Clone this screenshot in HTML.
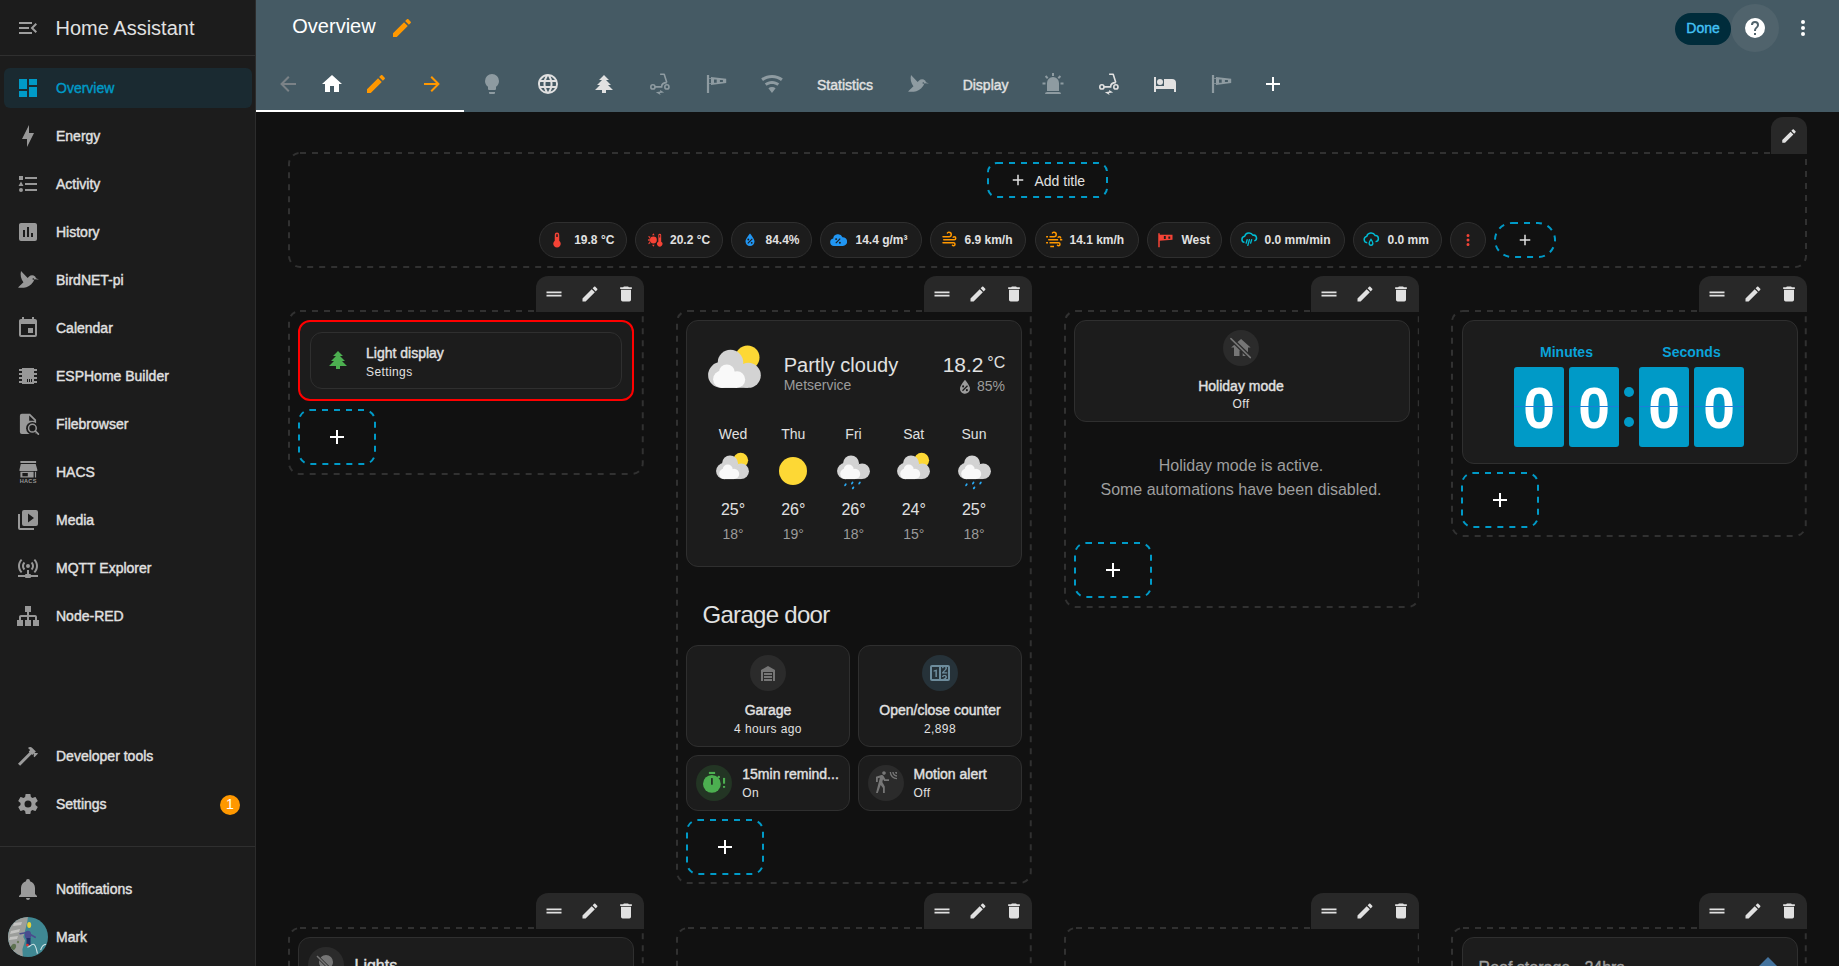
<!DOCTYPE html><html><head><meta charset="utf-8"><style>
html,body{margin:0;padding:0;}
body{width:1839px;height:966px;overflow:hidden;position:relative;background:#111111;font-family:"Liberation Sans",sans-serif;}
.t{position:absolute;white-space:nowrap;-webkit-font-smoothing:antialiased;}
svg{display:block;}
</style></head><body>
<div style="position:absolute;left:0px;top:0px;width:256px;height:966px;box-sizing:border-box;background:#1c1c1c;border-right:1px solid #2c2c2c;"></div>
<div style="position:absolute;left:0px;top:55px;width:255px;height:1px;box-sizing:border-box;background:#2f2f2f;"></div>
<svg style="position:absolute;left:16px;top:16px;width:24px;height:24px" viewBox="0 0 24 24"><path fill="#9e9e9e" d="M21,15.61L19.59,17L14.58,12L19.59,7L21,8.39L17.44,12L21,15.61M3,6H16V8H3V6M3,13V11H13V13H3M3,18V16H16V18H3Z"/></svg>
<div class="t" style="left:55.5px;top:17.87px;font-size:20px;line-height:20px;color:#e1e1e1;font-weight:400;">Home Assistant</div>
<div style="position:absolute;left:4px;top:68px;width:248px;height:40px;box-sizing:border-box;background:#1a2a31;border-radius:6px;"></div>
<svg style="position:absolute;left:16px;top:76px;width:24px;height:24px" viewBox="0 0 24 24"><path fill="#009ac7" d="M13,3V9H21V3M13,21H21V11H13M3,21H11V15H3M3,13H11V3H3V13Z"/></svg>
<div class="t" style="left:56px;top:80.85px;font-size:14px;line-height:14px;color:#009ac7;font-weight:400;-webkit-text-stroke:0.4px #009ac7;">Overview</div>
<svg style="position:absolute;left:16px;top:124px;width:24px;height:24px" viewBox="0 0 24 24"><path fill="#989898" d="M11 15H6L13 1V9H18L11 23V15Z"/></svg>
<div class="t" style="left:56px;top:128.85px;font-size:14px;line-height:14px;color:#e1e1e1;font-weight:400;-webkit-text-stroke:0.4px #e1e1e1;">Energy</div>
<svg style="position:absolute;left:16px;top:172px;width:24px;height:24px" viewBox="0 0 24 24"><path fill="#989898" d="M5,9.5L7.5,14H2.5L5,9.5M3,4H7V8H3V4M5,20A2,2 0 0,0 7,18A2,2 0 0,0 5,16A2,2 0 0,0 3,18A2,2 0 0,0 5,20M9,5V7H21V5H9M9,19H21V17H9V19M9,13H21V11H9V13Z"/></svg>
<div class="t" style="left:56px;top:176.85px;font-size:14px;line-height:14px;color:#e1e1e1;font-weight:400;-webkit-text-stroke:0.4px #e1e1e1;">Activity</div>
<svg style="position:absolute;left:16px;top:220px;width:24px;height:24px" viewBox="0 0 24 24"><path fill="#989898" d="M19 3H5C3.89 3 3 3.89 3 5V19A2 2 0 0 0 5 21H19A2 2 0 0 0 21 19V5C21 3.89 20.1 3 19 3M9 17H7V10H9V17M13 17H11V7H13V17M17 17H15V13H17V17Z"/></svg>
<div class="t" style="left:56px;top:224.85px;font-size:14px;line-height:14px;color:#e1e1e1;font-weight:400;-webkit-text-stroke:0.4px #e1e1e1;">History</div>
<svg style="position:absolute;left:16px;top:268px;width:24px;height:24px" viewBox="0 0 24 24"><path fill="#989898" d="M23 11.5L19.95 10.37C19.69 9.22 19.04 8.56 19.04 8.56C17.4 6.92 14.75 6.92 13.11 8.56L11.63 10.04L5 3C4 7 5 11 7.45 14.22L2 19.5C2 19.5 10.04 21.5 15.3 16.18C18.18 13.3 18.36 11.28 18.36 11.28L23 11.5M17.91 11.59C17.58 11.92 17.05 11.92 16.72 11.59C16.39 11.26 16.39 10.73 16.72 10.4C17.05 10.07 17.58 10.07 17.91 10.4C18.24 10.73 18.24 11.26 17.91 11.59Z"/></svg>
<div class="t" style="left:56px;top:272.85px;font-size:14px;line-height:14px;color:#e1e1e1;font-weight:400;-webkit-text-stroke:0.4px #e1e1e1;">BirdNET-pi</div>
<svg style="position:absolute;left:16px;top:316px;width:24px;height:24px" viewBox="0 0 24 24"><path fill="#989898" d="M19,19H5V8H19M16,1V3H8V1H6V3H5C3.89,3 3,3.89 3,5V19A2,2 0 0,0 5,21H19A2,2 0 0,0 21,19V5C21,3.89 20.1,3 19,3H18V1M17,12H12V17H17V12Z"/></svg>
<div class="t" style="left:56px;top:320.85px;font-size:14px;line-height:14px;color:#e1e1e1;font-weight:400;-webkit-text-stroke:0.4px #e1e1e1;">Calendar</div>
<svg style="position:absolute;left:16px;top:364px;width:24px;height:24px" viewBox="0 0 24 24"><path fill="#989898" d="M6,4H18V5H21V7H18V9H21V11H18V13H21V15H18V17H21V19H18V20H6V19H3V17H6V15H3V13H6V11H3V9H6V7H3V5H6V4M11,15V18H12V15H11M13,15V18H14V15H13M15,15V18H16V15H15Z"/></svg>
<div class="t" style="left:56px;top:368.85px;font-size:14px;line-height:14px;color:#e1e1e1;font-weight:400;-webkit-text-stroke:0.4px #e1e1e1;">ESPHome Builder</div>
<svg style="position:absolute;left:16px;top:412px;width:24px;height:24px" viewBox="0 0 24 24"><path fill="#989898" fill-rule="evenodd" d="M6,1.7H14L20.1,7.8V22H6A2,2 0 0,1 3.9,20V3.7A2,2 0 0,1 6,1.7Z M13.2,3.4V8.8H18.6Z"/><circle cx="16.4" cy="16.2" r="6.3" fill="#1c1c1c"/><path fill="#1c1c1c" d="M17.5,17.5L24,24V19Z"/><circle cx="16.4" cy="16.2" r="3.85" fill="none" stroke="#989898" stroke-width="1.5"/><path stroke="#989898" stroke-width="1.7" stroke-linecap="round" d="M19.4,19.2L22.4,22.2"/></svg>
<div class="t" style="left:56px;top:416.85px;font-size:14px;line-height:14px;color:#e1e1e1;font-weight:400;-webkit-text-stroke:0.4px #e1e1e1;">Filebrowser</div>
<svg style="position:absolute;left:16px;top:460px;width:24px;height:24px" viewBox="0 0 24 24"><path fill="#989898" d="M4.4,1H20.1V3H4.4Z M4.8,3.9H19.7L21.3,9.6V10.9H3.5V9.6Z M4.4,11.7H17.6V17.5H4.4Z M18.9,11.7H20.1V17.5H18.9Z"/><rect x="6.4" y="13" width="5.4" height="3.3" fill="#1c1c1c"/><text x="12.2" y="23.3" font-size="5.6" font-family="Liberation Sans" font-weight="bold" letter-spacing="0.25" fill="#989898" text-anchor="middle">HACS</text></svg>
<div class="t" style="left:56px;top:464.85px;font-size:14px;line-height:14px;color:#e1e1e1;font-weight:400;-webkit-text-stroke:0.4px #e1e1e1;">HACS</div>
<svg style="position:absolute;left:16px;top:508px;width:24px;height:24px" viewBox="0 0 24 24"><path fill="#989898" d="M4,6H2V20A2,2 0 0,0 4,22H18V20H4V6M20,2H8A2,2 0 0,0 6,4V16A2,2 0 0,0 8,18H20A2,2 0 0,0 22,16V4A2,2 0 0,0 20,2M12,14.5V5.5L18,10L12,14.5Z"/></svg>
<div class="t" style="left:56px;top:512.85px;font-size:14px;line-height:14px;color:#e1e1e1;font-weight:400;-webkit-text-stroke:0.4px #e1e1e1;">Media</div>
<svg style="position:absolute;left:16px;top:556px;width:24px;height:24px" viewBox="0 0 24 24"><path fill="#989898" d="M4.93,2.93C3.12,4.74 2,7.24 2,10C2,12.76 3.12,15.26 4.93,17.07L6.34,15.66C4.89,14.22 4,12.22 4,10C4,7.79 4.89,5.78 6.34,4.34L4.93,2.93M19.07,2.93L17.66,4.34C19.11,5.78 20,7.79 20,10C20,12.22 19.11,14.22 17.66,15.66L19.07,17.07C20.88,15.26 22,12.76 22,10C22,7.24 20.88,4.74 19.07,2.93M7.76,5.76C6.67,6.85 6,8.35 6,10C6,11.65 6.67,13.15 7.76,14.24L9.17,12.83C8.45,12.11 8,11.11 8,10C8,8.89 8.45,7.89 9.17,7.17L7.76,5.76M16.24,5.76L14.83,7.17C15.55,7.89 16,8.89 16,10C16,11.11 15.55,12.11 14.83,12.83L16.24,14.24C17.33,13.15 18,11.65 18,10C18,8.35 17.33,6.85 16.24,5.76M12,8A2,2 0 0,0 10,10A2,2 0 0,0 12,12A2,2 0 0,0 14,10A2,2 0 0,0 12,8M11,14V18H10A1,1 0 0,0 9,19H2V21H9A1,1 0 0,0 10,22H14A1,1 0 0,0 15,21H22V19H15A1,1 0 0,0 14,18H13V14H11Z"/></svg>
<div class="t" style="left:56px;top:560.85px;font-size:14px;line-height:14px;color:#e1e1e1;font-weight:400;-webkit-text-stroke:0.4px #e1e1e1;">MQTT Explorer</div>
<svg style="position:absolute;left:16px;top:604px;width:24px;height:24px" viewBox="0 0 24 24"><path fill="#989898" d="M9,2V8H11V11H5C3.89,11 3,11.89 3,13V16H1V22H7V16H5V13H11V16H9V22H15V16H13V13H19V16H17V22H23V16H21V13C21,11.89 20.1,11 19,11H13V8H15V2H9Z"/></svg>
<div class="t" style="left:56px;top:608.85px;font-size:14px;line-height:14px;color:#e1e1e1;font-weight:400;-webkit-text-stroke:0.4px #e1e1e1;">Node-RED</div>
<svg style="position:absolute;left:16px;top:744px;width:24px;height:24px" viewBox="0 0 24 24"><path fill="#9b9b9b" d="M2 19.63L13.43 8.2L12.72 7.5L14.14 6.07L12 3.89C13.2 2.7 15.09 2.7 16.27 3.89L19.87 7.5L18.45 8.91H21.29L22 9.62L18.45 13.21L17.74 12.5V9.62L16.27 11.04L15.56 10.33L4.13 21.76L2 19.63Z"/></svg>
<div class="t" style="left:56px;top:748.85px;font-size:14px;line-height:14px;color:#e1e1e1;font-weight:400;-webkit-text-stroke:0.4px #e1e1e1;">Developer tools</div>
<svg style="position:absolute;left:16px;top:792px;width:24px;height:24px" viewBox="0 0 24 24"><path fill="#9b9b9b" d="M12,15.5A3.5,3.5 0 0,1 8.5,12A3.5,3.5 0 0,1 12,8.5A3.5,3.5 0 0,1 15.5,12A3.5,3.5 0 0,1 12,15.5M19.43,12.97C19.47,12.65 19.5,12.33 19.5,12C19.5,11.67 19.47,11.34 19.43,11L21.54,9.37C21.73,9.22 21.78,8.95 21.66,8.73L19.66,5.27C19.54,5.05 19.27,4.96 19.05,5.05L16.56,6.05C16.04,5.66 15.5,5.32 14.87,5.07L14.5,2.42C14.46,2.18 14.25,2 14,2H10C9.75,2 9.54,2.18 9.5,2.42L9.13,5.07C8.5,5.32 7.96,5.66 7.44,6.05L4.95,5.05C4.73,4.96 4.46,5.05 4.34,5.27L2.34,8.73C2.21,8.95 2.27,9.22 2.46,9.37L4.57,11C4.53,11.34 4.5,11.67 4.5,12C4.5,12.33 4.53,12.65 4.57,12.97L2.46,14.63C2.27,14.78 2.21,15.05 2.34,15.27L4.34,18.73C4.46,18.95 4.73,19.03 4.95,18.95L7.44,17.94C7.96,18.34 8.5,18.68 9.13,18.93L9.5,21.58C9.54,21.82 9.75,22 10,22H14C14.25,22 14.46,21.82 14.5,21.58L14.87,18.93C15.5,18.67 16.04,18.34 16.56,17.94L19.05,18.95C19.27,19.03 19.54,18.95 19.66,18.73L21.66,15.27C21.78,15.05 21.73,14.78 21.54,14.63L19.43,12.97Z"/></svg>
<div class="t" style="left:56px;top:796.85px;font-size:14px;line-height:14px;color:#e1e1e1;font-weight:400;-webkit-text-stroke:0.4px #e1e1e1;">Settings</div>
<div style="position:absolute;left:220px;top:794.5px;width:20px;height:20px;box-sizing:border-box;background:#ff9800;border-radius:50%;"></div>
<div class="t" style="left:-370px;width:1200px;text-align:center;top:797.35px;font-size:14px;line-height:14px;color:#ffffff;font-weight:400;">1</div>
<div style="position:absolute;left:0px;top:846px;width:255px;height:1px;box-sizing:border-box;background:#2f2f2f;"></div>
<svg style="position:absolute;left:16px;top:877px;width:24px;height:24px" viewBox="0 0 24 24"><path fill="#9b9b9b" d="M21,19V20H3V19L5,17V11C5,7.9 7.03,5.17 10,4.29C10,4.19 10,4.1 10,4A2,2 0 0,1 12,2A2,2 0 0,1 14,4C14,4.1 14,4.19 14,4.29C16.97,5.17 19,7.9 19,11V17L21,19M14,21A2,2 0 0,1 12,23A2,2 0 0,1 10,21"/></svg>
<div class="t" style="left:56px;top:881.85px;font-size:14px;line-height:14px;color:#e1e1e1;font-weight:400;-webkit-text-stroke:0.4px #e1e1e1;">Notifications</div>
<svg style="position:absolute;left:8px;top:917px;width:40px;height:40px" viewBox="0 0 40 40"><defs><clipPath id="av"><circle cx="20" cy="20" r="20"/></clipPath></defs><g clip-path="url(#av)"><rect width="40" height="40" fill="#3f8893"/><path fill="#9c9e9b" d="M0,0H19.9L19.4,3.9L17.6,11.7L15.3,19.9L17.1,23.5L14.4,32.2L14.9,40H0Z"/><path fill="#c4c4c2" d="M6,6L14,5L13,8L5,9Z M3,14L12,12L11,15L2,17Z M2,20L10,19L9,22L1,23Z"/><path fill="#5b6e4c" d="M5,28A2.5,2.5 0 1,0 5.1,28Z"/><circle cx="6" cy="29" r="2.2" fill="#5e7250"/><circle cx="10" cy="25" r="1.2" fill="#6a7a58"/><path fill="none" stroke="#4a4c8e" stroke-width="1.6" stroke-linecap="round" d="M12.1,16.7L19,15.5L27.2,20.3"/><ellipse cx="20" cy="18" rx="3.2" ry="4.3" fill="#4a4c8e"/><rect x="18.5" y="21" width="4" height="7" fill="#22306a"/><ellipse cx="21.2" cy="8" rx="2" ry="3" fill="#e6d23a"/><circle cx="19.4" cy="28.1" r="1.4" fill="#e03030"/><path fill="none" stroke="#cfe3e6" stroke-width="1.1" d="M19.4,29.9C21,31 23,27 25.3,27.2C28,27.5 28.5,33 29.4,36.7 M32.6,33C33.5,30 36,27.5 38.1,27.2"/></g></svg>
<div class="t" style="left:56px;top:929.85px;font-size:14px;line-height:14px;color:#e1e1e1;font-weight:400;-webkit-text-stroke:0.4px #e1e1e1;">Mark</div>
<div style="position:absolute;left:256px;top:0px;width:1583px;height:112px;box-sizing:border-box;background:#455a64;"></div>
<div class="t" style="left:292.3px;top:15.77px;font-size:20px;line-height:20px;color:#ffffff;font-weight:400;">Overview</div>
<svg style="position:absolute;left:390px;top:16px;width:24px;height:24px" viewBox="0 0 24 24"><path fill="#ff9800" d="M20.71,7.04C21.1,6.65 21.1,6 20.71,5.63L18.37,3.29C18,2.9 17.35,2.9 16.96,3.29L15.12,5.12L18.87,8.87M3,17.25V21H6.75L17.81,9.93L14.06,6.18L3,17.25Z"/></svg>
<div style="position:absolute;left:256px;top:110px;width:208px;height:2px;box-sizing:border-box;background:#ffffff;"></div>
<svg style="position:absolute;left:276px;top:72px;width:24px;height:24px" viewBox="0 0 24 24"><path fill="#7b8287" d="M20,11V13H8L13.5,18.5L12.08,19.92L4.16,12L12.08,4.08L13.5,5.5L8,11H20Z"/></svg>
<svg style="position:absolute;left:320px;top:72px;width:24px;height:24px" viewBox="0 0 24 24"><path fill="#ffffff" d="M10,20V14H14V20H19V12H22L12,3L2,12H5V20H10Z"/></svg>
<svg style="position:absolute;left:364px;top:72px;width:24px;height:24px" viewBox="0 0 24 24"><path fill="#ff9800" d="M20.71,7.04C21.1,6.65 21.1,6 20.71,5.63L18.37,3.29C18,2.9 17.35,2.9 16.96,3.29L15.12,5.12L18.87,8.87M3,17.25V21H6.75L17.81,9.93L14.06,6.18L3,17.25Z"/></svg>
<svg style="position:absolute;left:420px;top:72px;width:24px;height:24px" viewBox="0 0 24 24"><path fill="#ff9800" d="M4,11V13H16L10.5,18.5L11.92,19.92L19.84,12L11.92,4.08L10.5,5.5L16,11H4Z"/></svg>
<svg style="position:absolute;left:480px;top:72px;width:24px;height:24px" viewBox="0 0 24 24"><path fill="#8e9ba1" d="M12,2A7,7 0 0,0 5,9C5,11.38 6.19,13.47 8,14.74V17A1,1 0 0,0 9,18H15A1,1 0 0,0 16,17V14.74C17.81,13.47 19,11.38 19,9A7,7 0 0,0 12,2M9,21A1,1 0 0,0 10,22H14A1,1 0 0,0 15,21V20H9V21Z"/></svg>
<svg style="position:absolute;left:536px;top:72px;width:24px;height:24px" viewBox="0 0 24 24"><path fill="#e1e1e1" d="M16.36,14C16.44,13.34 16.5,12.68 16.5,12C16.5,11.32 16.44,10.66 16.36,10H19.74C19.9,10.64 20,11.31 20,12C20,12.69 19.9,13.36 19.74,14M14.59,19.56C15.19,18.45 15.65,17.25 15.97,16H18.92C17.96,17.65 16.43,18.93 14.59,19.56M14.34,14H9.66C9.56,13.34 9.5,12.68 9.5,12C9.5,11.32 9.56,10.65 9.66,10H14.34C14.43,10.65 14.5,11.32 14.5,12C14.5,12.68 14.43,13.34 14.34,14M12,19.96C11.17,18.76 10.5,17.43 10.09,16H13.91C13.5,17.43 12.83,18.76 12,19.96M8,8H5.08C6.03,6.34 7.57,5.06 9.4,4.44C8.8,5.55 8.35,6.75 8,8M5.08,16H8C8.35,17.25 8.8,18.45 9.4,19.56C7.57,18.93 6.03,17.65 5.08,16M4.26,14C4.1,13.36 4,12.69 4,12C4,11.31 4.1,10.64 4.26,10H7.64C7.56,10.66 7.5,11.32 7.5,12C7.5,12.68 7.56,13.34 7.64,14M12,4.03C12.83,5.23 13.5,6.57 13.91,8H10.09C10.5,6.57 11.17,5.23 12,4.03M18.92,8H15.97C15.65,6.75 15.19,5.55 14.59,4.44C16.43,5.07 17.96,6.34 18.92,8M12,2C6.47,2 2,6.5 2,12A10,10 0 0,0 12,22A10,10 0 0,0 22,12A10,10 0 0,0 12,2Z"/></svg>
<svg style="position:absolute;left:592px;top:72px;width:24px;height:24px" viewBox="0 0 24 24"><path fill="#e1e1e1" d="M10,21V18H3L8,13H5L10,8H7L12,3L17,8H14L19,13H16L21,18H14V21H10Z"/></svg>
<svg style="position:absolute;left:648px;top:72px;width:24px;height:24px" viewBox="0 0 24 24"><g fill="none" stroke="#8e9ba1" stroke-width="1.6"><circle cx="4.9" cy="14.9" r="2.1"/><circle cx="18.9" cy="14.9" r="2.1"/><path d="M12.1,2.2H16.2L18.8,10.6" stroke-linejoin="round"/><path d="M7,14.9H13.6C13.6,12.3 15.5,10.6 18.8,10.6"/></g><path fill="#8e9ba1" d="M7.8,20.3L12.2,19.5L12.1,18.1L16.2,20.4L11.9,21.1L12.6,23Z"/></svg>
<svg style="position:absolute;left:704px;top:72px;width:24px;height:24px" viewBox="0 0 24 24"><path fill="#8e9ba1" fill-rule="evenodd" d="M2.9,3.1H5.1V21.1H2.9Z M5,6H7.1V6.8H5Z M5,10.9H7.1V11.7H5Z M7,5L22.2,6.7V11L7,12.9Z M10,7.5H12.7V10.8H10Z M15.9,8H18.9V10H15.9Z"/></svg>
<svg style="position:absolute;left:760px;top:72px;width:24px;height:24px" viewBox="0 0 24 24"><path fill="#8e9ba1" d="M12,21L15.6,16.2C14.6,15.45 13.35,15 12,15C10.65,15 9.4,15.45 8.4,16.2L12,21M12,3C7.95,3 4.21,4.34 1.2,6.6L3,9C5.5,7.12 8.62,6 12,6C15.38,6 18.5,7.12 21,9L22.8,6.6C19.79,4.34 16.05,3 12,3M12,9C9.3,9 6.81,9.89 4.8,11.4L6.6,13.8C8.1,12.67 9.97,12 12,12C14.03,12 15.9,12.67 17.4,13.8L19.2,11.4C17.19,9.89 14.7,9 12,9Z"/></svg>
<div class="t" style="left:245px;width:1200px;text-align:center;top:78.15px;font-size:14px;line-height:14px;color:#e1e1e1;font-weight:400;-webkit-text-stroke:0.4px #e1e1e1;">Statistics</div>
<svg style="position:absolute;left:906px;top:72px;width:24px;height:24px" viewBox="0 0 24 24"><path fill="#8e9ba1" d="M23 11.5L19.95 10.37C19.69 9.22 19.04 8.56 19.04 8.56C17.4 6.92 14.75 6.92 13.11 8.56L11.63 10.04L5 3C4 7 5 11 7.45 14.22L2 19.5C2 19.5 10.04 21.5 15.3 16.18C18.18 13.3 18.36 11.28 18.36 11.28L23 11.5M17.91 11.59C17.58 11.92 17.05 11.92 16.72 11.59C16.39 11.26 16.39 10.73 16.72 10.4C17.05 10.07 17.58 10.07 17.91 10.4C18.24 10.73 18.24 11.26 17.91 11.59Z"/></svg>
<div class="t" style="left:385.6px;width:1200px;text-align:center;top:78.15px;font-size:14px;line-height:14px;color:#e1e1e1;font-weight:400;-webkit-text-stroke:0.4px #e1e1e1;">Display</div>
<svg style="position:absolute;left:1041px;top:72px;width:24px;height:24px" viewBox="0 0 24 24"><path fill="#8e9ba1" d="M6,6.9L3.87,4.78L5.28,3.37L7.4,5.5L6,6.9M13,1V4H11V1H13M20.13,4.78L18,6.9L16.6,5.5L18.72,3.37L20.13,4.78M4.5,10.5V12.5H1.5V10.5H4.5M19.5,10.5H22.5V12.5H19.5V10.5M6,20H18A2,2 0 0,1 20,22H4A2,2 0 0,1 6,20M12,5A6,6 0 0,1 18,11V19H6V11A6,6 0 0,1 12,5Z"/></svg>
<svg style="position:absolute;left:1097px;top:72px;width:24px;height:24px" viewBox="0 0 24 24"><g fill="none" stroke="#e1e1e1" stroke-width="1.6"><circle cx="4.9" cy="14.9" r="2.1"/><circle cx="18.9" cy="14.9" r="2.1"/><path d="M12.1,2.2H16.2L18.8,10.6" stroke-linejoin="round"/><path d="M7,14.9H13.6C13.6,12.3 15.5,10.6 18.8,10.6"/></g><path fill="#e1e1e1" d="M7.8,20.3L12.2,19.5L12.1,18.1L16.2,20.4L11.9,21.1L12.6,23Z"/></svg>
<svg style="position:absolute;left:1153px;top:72px;width:24px;height:24px" viewBox="0 0 24 24"><path fill="#e1e1e1" d="M19,7H11V14H3V5H1V20H3V17H21V20H23V11A4,4 0 0,0 19,7M7,13A3,3 0 0,0 10,10A3,3 0 0,0 7,7A3,3 0 0,0 4,10A3,3 0 0,0 7,13Z"/></svg>
<svg style="position:absolute;left:1209px;top:72px;width:24px;height:24px" viewBox="0 0 24 24"><path fill="#8e9ba1" fill-rule="evenodd" d="M2.9,3.1H5.1V21.1H2.9Z M5,6H7.1V6.8H5Z M5,10.9H7.1V11.7H5Z M7,5L22.2,6.7V11L7,12.9Z M10,7.5H12.7V10.8H10Z M15.9,8H18.9V10H15.9Z"/></svg>
<svg style="position:absolute;left:1261px;top:72px;width:24px;height:24px" viewBox="0 0 24 24"><path fill="#ffffff" d="M19,13H13V19H11V13H5V11H11V5H13V11H19V13Z"/></svg>
<div style="position:absolute;left:1675px;top:13px;width:56px;height:32px;box-sizing:border-box;background:#002c3b;border-radius:16px;"></div>
<div class="t" style="left:1103px;width:1200px;text-align:center;top:20.75px;font-size:14px;line-height:14px;color:#43c2f5;font-weight:400;-webkit-text-stroke:0.4px #43c2f5;">Done</div>
<div style="position:absolute;left:1731px;top:4px;width:48px;height:48px;box-sizing:border-box;background:#50636c;border-radius:50%;"></div>
<svg style="position:absolute;left:1743px;top:16px;width:24px;height:24px" viewBox="0 0 24 24"><path fill="#ffffff" d="M15.07,11.25L14.17,12.17C13.45,12.89 13,13.5 13,15H11V14.5C11,13.39 11.45,12.39 12.17,11.67L13.41,10.41C13.78,10.05 14,9.55 14,9C14,7.89 13.1,7 12,7A2,2 0 0,0 10,9H8A4,4 0 0,1 12,5A4,4 0 0,1 16,9C16,9.88 15.64,10.67 15.07,11.25M13,19H11V17H13M12,2A10,10 0 0,0 2,12A10,10 0 0,0 12,22A10,10 0 0,0 22,12C22,6.47 17.5,2 12,2Z"/></svg>
<svg style="position:absolute;left:1791px;top:16px;width:24px;height:24px" viewBox="0 0 24 24"><path fill="#ffffff" d="M12,16A2,2 0 0,1 14,18A2,2 0 0,1 12,20A2,2 0 0,1 10,18A2,2 0 0,1 12,16M12,10A2,2 0 0,1 14,12A2,2 0 0,1 12,14A2,2 0 0,1 10,12A2,2 0 0,1 12,10M12,4A2,2 0 0,1 14,6A2,2 0 0,1 12,8A2,2 0 0,1 10,6A2,2 0 0,1 12,4Z"/></svg>
<svg style="position:absolute;left:288px;top:152px;width:1519px;height:116px" viewBox="0 0 1519 116"><path d="M12,1 H1518 V104 A11,11 0 0 1 1507,115 H12 A11,11 0 0 1 1,104 V12 A11,11 0 0 1 12,1 Z" fill="none" stroke="#313131" stroke-width="2" stroke-dasharray="6 6"/></svg>
<div style="position:absolute;left:1771px;top:117px;width:36px;height:37px;box-sizing:border-box;background:#282828;border-radius:12px 12px 0 0;"></div>
<svg style="position:absolute;left:1780px;top:126.5px;width:18px;height:18px" viewBox="0 0 24 24"><path fill="#e1e1e1" d="M20.71,7.04C21.1,6.65 21.1,6 20.71,5.63L18.37,3.29C18,2.9 17.35,2.9 16.96,3.29L15.12,5.12L18.87,8.87M3,17.25V21H6.75L17.81,9.93L14.06,6.18L3,17.25Z"/></svg>
<svg style="position:absolute;left:987px;top:162px;width:121px;height:36px" viewBox="0 0 121 36"><path d="M10,1 H111 A9,9 0 0 1 120,10 V26 A9,9 0 0 1 111,35 H10 A9,9 0 0 1 1,26 V10 A9,9 0 0 1 10,1 Z" fill="none" stroke="#009ac7" stroke-width="2" stroke-dasharray="6 6"/></svg>
<svg style="position:absolute;left:1009px;top:171px;width:18px;height:18px" viewBox="0 0 24 24"><path fill="#e1e1e1" d="M19,13H13V19H11V13H5V11H11V5H13V11H19V13Z"/></svg>
<div class="t" style="left:1034.5px;top:174.05px;font-size:14px;line-height:14px;color:#e1e1e1;font-weight:400;">Add title</div>
<div style="position:absolute;left:539px;top:222px;width:88px;height:36px;box-sizing:border-box;background:#1c1c1c;border:1px solid #2f2f2f;border-radius:18px;"></div>
<svg style="position:absolute;left:548px;top:231px;width:18px;height:18px" viewBox="0 0 24 24"><path fill="#f44336" d="M15 13V5A3 3 0 0 0 9 5V13A5 5 0 1 0 15 13M12 4A1 1 0 0 1 13 5V8H11V5A1 1 0 0 1 12 4Z"/></svg>
<div class="t" style="left:574.2px;top:233.94px;font-size:12px;line-height:12px;color:#e1e1e1;font-weight:700;">19.8 °C</div>
<div style="position:absolute;left:635px;top:222px;width:88px;height:36px;box-sizing:border-box;background:#1c1c1c;border:1px solid #2f2f2f;border-radius:18px;"></div>
<svg style="position:absolute;left:647px;top:231px;width:18px;height:18px" viewBox="0 0 24 24"><path fill="#f44336" d="M8.5,3L10.2,5.6H6.8Z M8.5,21L6.8,18.4H10.2Z M1,12L3.6,9.8V14.2Z M1.5,6.5L4.8,7.6L3,9.7Z M1.5,17.5L3,14.3L4.8,16.4Z"/><circle cx="8.5" cy="12" r="4.6" fill="#f44336"/><path fill="#f44336" d="M17,3.5A1.9,1.9 0 0,1 18.9,5.4V14.3A3.5,3.5 0 1,1 15.1,14.3V5.4A1.9,1.9 0 0,1 17,3.5Z"/><path fill="#1c1c1c" d="M16.4,5.3H17.6V8.6H16.4Z"/></svg>
<div class="t" style="left:670px;top:233.94px;font-size:12px;line-height:12px;color:#e1e1e1;font-weight:700;">20.2 °C</div>
<div style="position:absolute;left:731px;top:222px;width:81px;height:36px;box-sizing:border-box;background:#1c1c1c;border:1px solid #2f2f2f;border-radius:18px;"></div>
<svg style="position:absolute;left:741px;top:231px;width:18px;height:18px" viewBox="0 0 24 24"><path fill="#2196f3" d="M12,3.25C12,3.25 6,10 6,14C6,17.32 8.69,20 12,20A6,6 0 0,0 18,14C18,10 12,3.25 12,3.25M14.47,9.97L15.53,11.03L9.53,17.03L8.47,15.97M9.75,10A1.25,1.25 0 0,1 11,11.25A1.25,1.25 0 0,1 9.75,12.5A1.25,1.25 0 0,1 8.5,11.25A1.25,1.25 0 0,1 9.75,10M14.25,14.5A1.25,1.25 0 0,1 15.5,15.75A1.25,1.25 0 0,1 14.25,17A1.25,1.25 0 0,1 13,15.75A1.25,1.25 0 0,1 14.25,14.5Z"/></svg>
<div class="t" style="left:765.5px;top:233.94px;font-size:12px;line-height:12px;color:#e1e1e1;font-weight:700;">84.4%</div>
<div style="position:absolute;left:820px;top:222px;width:102px;height:36px;box-sizing:border-box;background:#1c1c1c;border:1px solid #2f2f2f;border-radius:18px;"></div>
<svg style="position:absolute;left:829px;top:231px;width:18px;height:18px" viewBox="0 0 24 24"><path fill="#2196f3" d="M6.5,20A5,5 0 0,1 5.6,10.1A6.5,6.5 0 0,1 18,8.2A4.5,4.5 0 0,1 18.5,20Z"/><path fill="#1c1c1c" d="M14.4,9.6L15.5,10.7L9.6,16.6L8.5,15.5Z"/><circle cx="9.5" cy="10.8" r="1.3" fill="#1c1c1c"/><circle cx="14.5" cy="15.6" r="1.3" fill="#1c1c1c"/></svg>
<div class="t" style="left:855.5px;top:233.94px;font-size:12px;line-height:12px;color:#e1e1e1;font-weight:700;">14.4 g/m³</div>
<div style="position:absolute;left:930px;top:222px;width:96px;height:36px;box-sizing:border-box;background:#1c1c1c;border:1px solid #2f2f2f;border-radius:18px;"></div>
<svg style="position:absolute;left:940px;top:230px;width:18px;height:18px" viewBox="0 0 24 24"><path fill="#ff9800" d="M4,10A1,1 0 0,1 3,9A1,1 0 0,1 4,8H12A2,2 0 0,0 14,6A2,2 0 0,0 12,4C11.45,4 10.95,4.22 10.59,4.59C10.2,5 9.56,5 9.17,4.59C8.78,4.2 8.78,3.56 9.17,3.17C9.9,2.45 10.9,2 12,2A4,4 0 0,1 16,6A4,4 0 0,1 12,10H4M19,12A1,1 0 0,0 20,11A1,1 0 0,0 19,10C18.72,10 18.47,10.11 18.29,10.29C17.9,10.68 17.27,10.68 16.88,10.29C16.5,9.9 16.5,9.27 16.88,8.88C17.42,8.34 18.17,8 19,8A3,3 0 0,1 22,11A3,3 0 0,1 19,14H5A1,1 0 0,1 4,13A1,1 0 0,1 5,12H19M18,18H4A1,1 0 0,1 3,17A1,1 0 0,1 4,16H18A3,3 0 0,1 21,19A3,3 0 0,1 18,22C17.17,22 16.42,21.66 15.88,21.12C15.5,20.73 15.5,20.1 15.88,19.71C16.27,19.32 16.9,19.32 17.29,19.71C17.47,19.89 17.72,20 18,20A1,1 0 0,0 19,19A1,1 0 0,0 18,18Z"/></svg>
<div class="t" style="left:964.5px;top:233.94px;font-size:12px;line-height:12px;color:#e1e1e1;font-weight:700;">6.9 km/h</div>
<div style="position:absolute;left:1035px;top:222px;width:104px;height:36px;box-sizing:border-box;background:#1c1c1c;border:1px solid #2f2f2f;border-radius:18px;"></div>
<svg style="position:absolute;left:1045px;top:230px;width:18px;height:18px" viewBox="0 0 24 24"><path fill="#ff9800" d="M4,10A1,1 0 0,1 3,9A1,1 0 0,1 4,8H12A2,2 0 0,0 14,6A2,2 0 0,0 12,4C11.45,4 10.95,4.22 10.59,4.59C10.2,5 9.56,5 9.17,4.59C8.78,4.2 8.78,3.56 9.17,3.17C9.9,2.45 10.9,2 12,2A4,4 0 0,1 16,6A4,4 0 0,1 12,10H4M19,12A1,1 0 0,0 20,11A1,1 0 0,0 19,10C18.72,10 18.47,10.11 18.29,10.29C17.9,10.68 17.27,10.68 16.88,10.29C16.5,9.9 16.5,9.27 16.88,8.88C17.42,8.34 18.17,8 19,8A3,3 0 0,1 22,11A3,3 0 0,1 19,14H5A1,1 0 0,1 4,13A1,1 0 0,1 5,12H19M18,18H4A1,1 0 0,1 3,17A1,1 0 0,1 4,16H18A3,3 0 0,1 21,19A3,3 0 0,1 18,22C17.17,22 16.42,21.66 15.88,21.12C15.5,20.73 15.5,20.1 15.88,19.71C16.27,19.32 16.9,19.32 17.29,19.71C17.47,19.89 17.72,20 18,20A1,1 0 0,0 19,19A1,1 0 0,0 18,18Z"/><path fill="#1c1c1c" d="M1,7.3H6V10.6H1Z M17.5,11.3H23V14.7H17.5Z M1,15.5H6V18.6H1Z"/><path fill="#ff9800" d="M1.5,8H4V10H1.5Z M20,12H23V14H20Z M1.5,16H4V18H1.5Z M7,21H12V23H7Z"/></svg>
<div class="t" style="left:1069.5px;top:233.94px;font-size:12px;line-height:12px;color:#e1e1e1;font-weight:700;">14.1 km/h</div>
<div style="position:absolute;left:1147px;top:222px;width:75px;height:36px;box-sizing:border-box;background:#1c1c1c;border:1px solid #2f2f2f;border-radius:18px;"></div>
<svg style="position:absolute;left:1156px;top:230.5px;width:18px;height:18px" viewBox="0 0 24 24"><path fill="#f44336" fill-rule="evenodd" d="M3,3H5V21.5H3Z M5,5H22V11.5L5,13Z M10.5,6.8H13V10.8H10.5Z M16.5,7.2H19V10.2H16.5Z"/></svg>
<div class="t" style="left:1181.5px;top:233.94px;font-size:12px;line-height:12px;color:#e1e1e1;font-weight:700;">West</div>
<div style="position:absolute;left:1230px;top:222px;width:115px;height:36px;box-sizing:border-box;background:#1c1c1c;border:1px solid #2f2f2f;border-radius:18px;"></div>
<svg style="position:absolute;left:1240px;top:230px;width:18px;height:18px" viewBox="0 0 24 24"><path fill="none" stroke="#00bcd4" stroke-width="2" d="M6,16.5A4.2,4.2 0 0,1 6.3,8.2A6,6 0 0,1 17.3,7A3.7,3.7 0 0,1 19,14.5"/><path fill="none" stroke="#00bcd4" stroke-width="1.8" stroke-linecap="round" d="M9.5,13L8.2,17.5 M12.5,13L10.4,20.5 M15.5,13L14.2,17.5"/></svg>
<div class="t" style="left:1264.5px;top:233.94px;font-size:12px;line-height:12px;color:#e1e1e1;font-weight:700;">0.0 mm/min</div>
<div style="position:absolute;left:1353px;top:222px;width:89px;height:36px;box-sizing:border-box;background:#1c1c1c;border:1px solid #2f2f2f;border-radius:18px;"></div>
<svg style="position:absolute;left:1362px;top:230px;width:18px;height:18px" viewBox="0 0 24 24"><path fill="none" stroke="#00bcd4" stroke-width="2" d="M7,17A4.3,4.3 0 0,1 6.3,8.5A6,6 0 0,1 17.5,7.3A4,4 0 0,1 18,15.5"/><path fill="none" stroke="#00bcd4" stroke-width="1.8" d="M12,12.5C12,12.5 9.5,16 9.5,17.8A2.5,2.5 0 0,0 14.5,17.8C14.5,16 12,12.5 12,12.5Z"/></svg>
<div class="t" style="left:1387.5px;top:233.94px;font-size:12px;line-height:12px;color:#e1e1e1;font-weight:700;">0.0 mm</div>
<div style="position:absolute;left:1450px;top:222px;width:36px;height:36px;box-sizing:border-box;background:#1c1c1c;border:1px solid #2f2f2f;border-radius:18px;"></div>
<svg style="position:absolute;left:1459px;top:231px;width:18px;height:18px" viewBox="0 0 24 24"><path fill="#f44336" d="M12,16A2,2 0 0,1 14,18A2,2 0 0,1 12,20A2,2 0 0,1 10,18A2,2 0 0,1 12,16M12,10A2,2 0 0,1 14,12A2,2 0 0,1 12,14A2,2 0 0,1 10,12A2,2 0 0,1 12,10M12,4A2,2 0 0,1 14,6A2,2 0 0,1 12,8A2,2 0 0,1 10,6A2,2 0 0,1 12,4Z"/></svg>
<svg style="position:absolute;left:1494px;top:222px;width:62px;height:36px" viewBox="0 0 62 36"><path d="M18,1 H44 A17,17 0 0 1 61,18 V18 A17,17 0 0 1 44,35 H18 A17,17 0 0 1 1,18 V18 A17,17 0 0 1 18,1 Z" fill="none" stroke="#009ac7" stroke-width="2" stroke-dasharray="6 6"/></svg>
<svg style="position:absolute;left:1516px;top:231px;width:18px;height:18px" viewBox="0 0 24 24"><path fill="#e1e1e1" d="M19,13H13V19H11V13H5V11H11V5H13V11H19V13Z"/></svg>
<svg style="position:absolute;left:288px;top:310px;width:355.75px;height:165px" viewBox="0 0 355.75 165"><path d="M12,1 H354.75 V153 A11,11 0 0 1 343.75,164 H12 A11,11 0 0 1 1,153 V12 A11,11 0 0 1 12,1 Z" fill="none" stroke="#313131" stroke-width="2" stroke-dasharray="6 6"/></svg>
<div style="position:absolute;left:535.75px;top:276px;width:108px;height:36px;box-sizing:border-box;background:#282828;border-radius:12px 12px 0 0;"></div>
<svg style="position:absolute;left:543.75px;top:284px;width:20px;height:20px" viewBox="0 0 24 24"><path fill="#e1e1e1" d="M21,11H3V9H21V11M21,13H3V15H21V13Z"/></svg>
<svg style="position:absolute;left:579.75px;top:284px;width:20px;height:20px" viewBox="0 0 24 24"><path fill="#e1e1e1" d="M20.71,7.04C21.1,6.65 21.1,6 20.71,5.63L18.37,3.29C18,2.9 17.35,2.9 16.96,3.29L15.12,5.12L18.87,8.87M3,17.25V21H6.75L17.81,9.93L14.06,6.18L3,17.25Z"/></svg>
<svg style="position:absolute;left:615.75px;top:284px;width:20px;height:20px" viewBox="0 0 24 24"><path fill="#e1e1e1" d="M19,4H15.5L14.5,3H9.5L8.5,4H5V6H19M6,19A2,2 0 0,0 8,21H16A2,2 0 0,0 18,19V7H6V19Z"/></svg>
<svg style="position:absolute;left:675.75px;top:310px;width:355.75px;height:574px" viewBox="0 0 355.75 574"><path d="M12,1 H354.75 V562 A11,11 0 0 1 343.75,573 H12 A11,11 0 0 1 1,562 V12 A11,11 0 0 1 12,1 Z" fill="none" stroke="#313131" stroke-width="2" stroke-dasharray="6 6"/></svg>
<div style="position:absolute;left:923.5px;top:276px;width:108px;height:36px;box-sizing:border-box;background:#282828;border-radius:12px 12px 0 0;"></div>
<svg style="position:absolute;left:931.5px;top:284px;width:20px;height:20px" viewBox="0 0 24 24"><path fill="#e1e1e1" d="M21,11H3V9H21V11M21,13H3V15H21V13Z"/></svg>
<svg style="position:absolute;left:967.5px;top:284px;width:20px;height:20px" viewBox="0 0 24 24"><path fill="#e1e1e1" d="M20.71,7.04C21.1,6.65 21.1,6 20.71,5.63L18.37,3.29C18,2.9 17.35,2.9 16.96,3.29L15.12,5.12L18.87,8.87M3,17.25V21H6.75L17.81,9.93L14.06,6.18L3,17.25Z"/></svg>
<svg style="position:absolute;left:1003.5px;top:284px;width:20px;height:20px" viewBox="0 0 24 24"><path fill="#e1e1e1" d="M19,4H15.5L14.5,3H9.5L8.5,4H5V6H19M6,19A2,2 0 0,0 8,21H16A2,2 0 0,0 18,19V7H6V19Z"/></svg>
<svg style="position:absolute;left:1063.5px;top:310px;width:355.75px;height:298px" viewBox="0 0 355.75 298"><path d="M12,1 H354.75 V286 A11,11 0 0 1 343.75,297 H12 A11,11 0 0 1 1,286 V12 A11,11 0 0 1 12,1 Z" fill="none" stroke="#313131" stroke-width="2" stroke-dasharray="6 6"/></svg>
<div style="position:absolute;left:1311.25px;top:276px;width:108px;height:36px;box-sizing:border-box;background:#282828;border-radius:12px 12px 0 0;"></div>
<svg style="position:absolute;left:1319.25px;top:284px;width:20px;height:20px" viewBox="0 0 24 24"><path fill="#e1e1e1" d="M21,11H3V9H21V11M21,13H3V15H21V13Z"/></svg>
<svg style="position:absolute;left:1355.25px;top:284px;width:20px;height:20px" viewBox="0 0 24 24"><path fill="#e1e1e1" d="M20.71,7.04C21.1,6.65 21.1,6 20.71,5.63L18.37,3.29C18,2.9 17.35,2.9 16.96,3.29L15.12,5.12L18.87,8.87M3,17.25V21H6.75L17.81,9.93L14.06,6.18L3,17.25Z"/></svg>
<svg style="position:absolute;left:1391.25px;top:284px;width:20px;height:20px" viewBox="0 0 24 24"><path fill="#e1e1e1" d="M19,4H15.5L14.5,3H9.5L8.5,4H5V6H19M6,19A2,2 0 0,0 8,21H16A2,2 0 0,0 18,19V7H6V19Z"/></svg>
<svg style="position:absolute;left:1451.25px;top:310px;width:355.75px;height:227px" viewBox="0 0 355.75 227"><path d="M12,1 H354.75 V215 A11,11 0 0 1 343.75,226 H12 A11,11 0 0 1 1,215 V12 A11,11 0 0 1 12,1 Z" fill="none" stroke="#313131" stroke-width="2" stroke-dasharray="6 6"/></svg>
<div style="position:absolute;left:1699.0px;top:276px;width:108px;height:36px;box-sizing:border-box;background:#282828;border-radius:12px 12px 0 0;"></div>
<svg style="position:absolute;left:1707.0px;top:284px;width:20px;height:20px" viewBox="0 0 24 24"><path fill="#e1e1e1" d="M21,11H3V9H21V11M21,13H3V15H21V13Z"/></svg>
<svg style="position:absolute;left:1743.0px;top:284px;width:20px;height:20px" viewBox="0 0 24 24"><path fill="#e1e1e1" d="M20.71,7.04C21.1,6.65 21.1,6 20.71,5.63L18.37,3.29C18,2.9 17.35,2.9 16.96,3.29L15.12,5.12L18.87,8.87M3,17.25V21H6.75L17.81,9.93L14.06,6.18L3,17.25Z"/></svg>
<svg style="position:absolute;left:1779.0px;top:284px;width:20px;height:20px" viewBox="0 0 24 24"><path fill="#e1e1e1" d="M19,4H15.5L14.5,3H9.5L8.5,4H5V6H19M6,19A2,2 0 0,0 8,21H16A2,2 0 0,0 18,19V7H6V19Z"/></svg>
<svg style="position:absolute;left:288px;top:927px;width:355.75px;height:200px" viewBox="0 0 355.75 200"><path d="M12,1 H354.75 V188 A11,11 0 0 1 343.75,199 H12 A11,11 0 0 1 1,188 V12 A11,11 0 0 1 12,1 Z" fill="none" stroke="#313131" stroke-width="2" stroke-dasharray="6 6"/></svg>
<div style="position:absolute;left:535.75px;top:893px;width:108px;height:36px;box-sizing:border-box;background:#282828;border-radius:12px 12px 0 0;"></div>
<svg style="position:absolute;left:543.75px;top:901px;width:20px;height:20px" viewBox="0 0 24 24"><path fill="#e1e1e1" d="M21,11H3V9H21V11M21,13H3V15H21V13Z"/></svg>
<svg style="position:absolute;left:579.75px;top:901px;width:20px;height:20px" viewBox="0 0 24 24"><path fill="#e1e1e1" d="M20.71,7.04C21.1,6.65 21.1,6 20.71,5.63L18.37,3.29C18,2.9 17.35,2.9 16.96,3.29L15.12,5.12L18.87,8.87M3,17.25V21H6.75L17.81,9.93L14.06,6.18L3,17.25Z"/></svg>
<svg style="position:absolute;left:615.75px;top:901px;width:20px;height:20px" viewBox="0 0 24 24"><path fill="#e1e1e1" d="M19,4H15.5L14.5,3H9.5L8.5,4H5V6H19M6,19A2,2 0 0,0 8,21H16A2,2 0 0,0 18,19V7H6V19Z"/></svg>
<svg style="position:absolute;left:675.75px;top:927px;width:355.75px;height:200px" viewBox="0 0 355.75 200"><path d="M12,1 H354.75 V188 A11,11 0 0 1 343.75,199 H12 A11,11 0 0 1 1,188 V12 A11,11 0 0 1 12,1 Z" fill="none" stroke="#313131" stroke-width="2" stroke-dasharray="6 6"/></svg>
<div style="position:absolute;left:923.5px;top:893px;width:108px;height:36px;box-sizing:border-box;background:#282828;border-radius:12px 12px 0 0;"></div>
<svg style="position:absolute;left:931.5px;top:901px;width:20px;height:20px" viewBox="0 0 24 24"><path fill="#e1e1e1" d="M21,11H3V9H21V11M21,13H3V15H21V13Z"/></svg>
<svg style="position:absolute;left:967.5px;top:901px;width:20px;height:20px" viewBox="0 0 24 24"><path fill="#e1e1e1" d="M20.71,7.04C21.1,6.65 21.1,6 20.71,5.63L18.37,3.29C18,2.9 17.35,2.9 16.96,3.29L15.12,5.12L18.87,8.87M3,17.25V21H6.75L17.81,9.93L14.06,6.18L3,17.25Z"/></svg>
<svg style="position:absolute;left:1003.5px;top:901px;width:20px;height:20px" viewBox="0 0 24 24"><path fill="#e1e1e1" d="M19,4H15.5L14.5,3H9.5L8.5,4H5V6H19M6,19A2,2 0 0,0 8,21H16A2,2 0 0,0 18,19V7H6V19Z"/></svg>
<svg style="position:absolute;left:1063.5px;top:927px;width:355.75px;height:200px" viewBox="0 0 355.75 200"><path d="M12,1 H354.75 V188 A11,11 0 0 1 343.75,199 H12 A11,11 0 0 1 1,188 V12 A11,11 0 0 1 12,1 Z" fill="none" stroke="#313131" stroke-width="2" stroke-dasharray="6 6"/></svg>
<div style="position:absolute;left:1311.25px;top:893px;width:108px;height:36px;box-sizing:border-box;background:#282828;border-radius:12px 12px 0 0;"></div>
<svg style="position:absolute;left:1319.25px;top:901px;width:20px;height:20px" viewBox="0 0 24 24"><path fill="#e1e1e1" d="M21,11H3V9H21V11M21,13H3V15H21V13Z"/></svg>
<svg style="position:absolute;left:1355.25px;top:901px;width:20px;height:20px" viewBox="0 0 24 24"><path fill="#e1e1e1" d="M20.71,7.04C21.1,6.65 21.1,6 20.71,5.63L18.37,3.29C18,2.9 17.35,2.9 16.96,3.29L15.12,5.12L18.87,8.87M3,17.25V21H6.75L17.81,9.93L14.06,6.18L3,17.25Z"/></svg>
<svg style="position:absolute;left:1391.25px;top:901px;width:20px;height:20px" viewBox="0 0 24 24"><path fill="#e1e1e1" d="M19,4H15.5L14.5,3H9.5L8.5,4H5V6H19M6,19A2,2 0 0,0 8,21H16A2,2 0 0,0 18,19V7H6V19Z"/></svg>
<svg style="position:absolute;left:1451.25px;top:927px;width:355.75px;height:200px" viewBox="0 0 355.75 200"><path d="M12,1 H354.75 V188 A11,11 0 0 1 343.75,199 H12 A11,11 0 0 1 1,188 V12 A11,11 0 0 1 12,1 Z" fill="none" stroke="#313131" stroke-width="2" stroke-dasharray="6 6"/></svg>
<div style="position:absolute;left:1699.0px;top:893px;width:108px;height:36px;box-sizing:border-box;background:#282828;border-radius:12px 12px 0 0;"></div>
<svg style="position:absolute;left:1707.0px;top:901px;width:20px;height:20px" viewBox="0 0 24 24"><path fill="#e1e1e1" d="M21,11H3V9H21V11M21,13H3V15H21V13Z"/></svg>
<svg style="position:absolute;left:1743.0px;top:901px;width:20px;height:20px" viewBox="0 0 24 24"><path fill="#e1e1e1" d="M20.71,7.04C21.1,6.65 21.1,6 20.71,5.63L18.37,3.29C18,2.9 17.35,2.9 16.96,3.29L15.12,5.12L18.87,8.87M3,17.25V21H6.75L17.81,9.93L14.06,6.18L3,17.25Z"/></svg>
<svg style="position:absolute;left:1779.0px;top:901px;width:20px;height:20px" viewBox="0 0 24 24"><path fill="#e1e1e1" d="M19,4H15.5L14.5,3H9.5L8.5,4H5V6H19M6,19A2,2 0 0,0 8,21H16A2,2 0 0,0 18,19V7H6V19Z"/></svg>
<div style="position:absolute;left:298px;top:320px;width:336px;height:81px;box-sizing:border-box;background:#1c1c1c;border:2px solid #ff0000;border-radius:12px;"></div>
<div style="position:absolute;left:310px;top:332px;width:312px;height:57px;box-sizing:border-box;background:#1c1c1c;border:1px solid #2f2f2f;border-radius:12px;"></div>
<svg style="position:absolute;left:326px;top:348px;width:24px;height:24px" viewBox="0 0 24 24"><path fill="#4caf50" d="M10,21V18H3L8,13H5L10,8H7L12,3L17,8H14L19,13H16L21,18H14V21H10Z"/></svg>
<div class="t" style="left:366px;top:346.25px;font-size:14px;line-height:14px;color:#e1e1e1;font-weight:400;-webkit-text-stroke:0.4px #e1e1e1;">Light display</div>
<div class="t" style="left:366px;top:365.64px;font-size:12px;line-height:12px;color:#e1e1e1;font-weight:400;letter-spacing:0.4px;">Settings</div>
<svg style="position:absolute;left:298px;top:409px;width:78px;height:56px" viewBox="0 0 78 56"><path d="M12,1 H66 A11,11 0 0 1 77,12 V44 A11,11 0 0 1 66,55 H12 A11,11 0 0 1 1,44 V12 A11,11 0 0 1 12,1 Z" fill="none" stroke="#009ac7" stroke-width="2" stroke-dasharray="6 6"/></svg>
<svg style="position:absolute;left:325.0px;top:425.0px;width:24px;height:24px" viewBox="0 0 24 24"><path fill="#ffffff" d="M19,13H13V19H11V13H5V11H11V5H13V11H19V13Z"/></svg>
<div style="position:absolute;left:686px;top:320px;width:336px;height:247px;box-sizing:border-box;background:#1c1c1c;border:1px solid #2f2f2f;border-radius:12px;"></div>
<svg style="position:absolute;left:700.00px;top:338.00px;width:60.00px;height:66.00px" viewBox="0 0 60 66" overflow="visible"><circle cx="47.5" cy="19.6" r="12" fill="#fdd835"/><g fill="#d3d3d3"><circle cx="30.5" cy="24.6" r="12.75"/><circle cx="21" cy="37" r="12.9"/><circle cx="48.3" cy="37.3" r="12.5"/><rect x="21" y="30" width="27.3" height="19.8"/></g><g fill="#f9f9f9"><circle cx="26.8" cy="34.4" r="8"/><circle cx="21.6" cy="41.3" r="8.5"/><circle cx="37" cy="41.5" r="8.2"/><rect x="21.6" y="36" width="15.4" height="13.8"/></g></svg>
<div class="t" style="left:783.7px;top:354.97px;font-size:20px;line-height:20px;color:#e1e1e1;font-weight:400;">Partly cloudy</div>
<div class="t" style="left:783.7px;top:377.95px;font-size:14px;line-height:14px;color:#9b9b9b;font-weight:400;">Metservice</div>
<div class="t" style="left:-216.5px;width:1200px;text-align:right;top:354.42px;font-size:21px;line-height:21px;color:#e1e1e1;font-weight:400;">18.2</div>
<div class="t" style="left:-194.70000000000005px;width:1200px;text-align:right;top:355.05px;font-size:16px;line-height:16px;color:#e1e1e1;font-weight:400;">°C</div>
<div class="t" style="left:-195px;width:1200px;text-align:right;top:379.15px;font-size:14px;line-height:14px;color:#9b9b9b;font-weight:400;">85%</div>
<svg style="position:absolute;left:955px;top:377.3px;width:20px;height:20px" viewBox="0 0 24 24"><path fill="#9b9b9b" d="M12,3.25C12,3.25 6,10 6,14C6,17.32 8.69,20 12,20A6,6 0 0,0 18,14C18,10 12,3.25 12,3.25M14.47,9.97L15.53,11.03L9.53,17.03L8.47,15.97M9.75,10A1.25,1.25 0 0,1 11,11.25A1.25,1.25 0 0,1 9.75,12.5A1.25,1.25 0 0,1 8.5,11.25A1.25,1.25 0 0,1 9.75,10M14.25,14.5A1.25,1.25 0 0,1 15.5,15.75A1.25,1.25 0 0,1 14.25,17A1.25,1.25 0 0,1 13,15.75A1.25,1.25 0 0,1 14.25,14.5Z"/></svg>
<div class="t" style="left:133.0px;width:1200px;text-align:center;top:426.85px;font-size:14px;line-height:14px;color:#e1e1e1;font-weight:400;">Wed</div>
<svg style="position:absolute;left:711.10px;top:447.80px;width:37.44px;height:41.18px" viewBox="0 0 60 66" overflow="visible"><circle cx="47.5" cy="19.6" r="12" fill="#fdd835"/><g fill="#d3d3d3"><circle cx="30.5" cy="24.6" r="12.75"/><circle cx="21" cy="37" r="12.9"/><circle cx="48.3" cy="37.3" r="12.5"/><rect x="21" y="30" width="27.3" height="19.8"/></g><g fill="#f9f9f9"><circle cx="26.8" cy="34.4" r="8"/><circle cx="21.6" cy="41.3" r="8.5"/><circle cx="37" cy="41.5" r="8.2"/><rect x="21.6" y="36" width="15.4" height="13.8"/></g></svg>
<div class="t" style="left:133.0px;width:1200px;text-align:center;top:502.45px;font-size:16px;line-height:16px;color:#e1e1e1;font-weight:400;">25°</div>
<div class="t" style="left:133.0px;width:1200px;text-align:center;top:527.45px;font-size:14px;line-height:14px;color:#9b9b9b;font-weight:400;">18°</div>
<div class="t" style="left:193.25px;width:1200px;text-align:center;top:426.85px;font-size:14px;line-height:14px;color:#e1e1e1;font-weight:400;">Thu</div>
<div style="position:absolute;left:778.55px;top:456.7px;width:28px;height:28px;box-sizing:border-box;background:#fdd835;border-radius:50%;"></div>
<div class="t" style="left:193.25px;width:1200px;text-align:center;top:502.45px;font-size:16px;line-height:16px;color:#e1e1e1;font-weight:400;">26°</div>
<div class="t" style="left:193.25px;width:1200px;text-align:center;top:527.45px;font-size:14px;line-height:14px;color:#9b9b9b;font-weight:400;">19°</div>
<div class="t" style="left:253.5px;width:1200px;text-align:center;top:426.85px;font-size:14px;line-height:14px;color:#e1e1e1;font-weight:400;">Fri</div>
<svg style="position:absolute;left:832.40px;top:447.80px;width:37.44px;height:41.18px" viewBox="0 0 60 66" overflow="visible"><g fill="#d3d3d3"><circle cx="30.5" cy="24.6" r="12.75"/><circle cx="21" cy="37" r="12.9"/><circle cx="48.3" cy="37.3" r="12.5"/><rect x="21" y="30" width="27.3" height="19.8"/></g><g fill="#f9f9f9"><circle cx="26.8" cy="34.4" r="8"/><circle cx="21.6" cy="41.3" r="8.5"/><circle cx="37" cy="41.5" r="8.2"/><rect x="21.6" y="36" width="15.4" height="13.8"/></g><ellipse cx="21.5" cy="59" rx="1.5" ry="2.6" transform="rotate(35 21.5 59)" fill="#29a9f2"/><ellipse cx="32.4" cy="56.2" rx="1.5" ry="2.6" transform="rotate(35 32.4 56.2)" fill="#29a9f2"/><ellipse cx="44.1" cy="56.2" rx="1.5" ry="2.6" transform="rotate(35 44.1 56.2)" fill="#29a9f2"/><ellipse cx="33.8" cy="63.9" rx="1.5" ry="2.6" transform="rotate(35 33.8 63.9)" fill="#29a9f2"/></svg>
<div class="t" style="left:253.5px;width:1200px;text-align:center;top:502.45px;font-size:16px;line-height:16px;color:#e1e1e1;font-weight:400;">26°</div>
<div class="t" style="left:253.5px;width:1200px;text-align:center;top:527.45px;font-size:14px;line-height:14px;color:#9b9b9b;font-weight:400;">18°</div>
<div class="t" style="left:313.75px;width:1200px;text-align:center;top:426.85px;font-size:14px;line-height:14px;color:#e1e1e1;font-weight:400;">Sat</div>
<svg style="position:absolute;left:891.85px;top:447.80px;width:37.44px;height:41.18px" viewBox="0 0 60 66" overflow="visible"><circle cx="47.5" cy="19.6" r="12" fill="#fdd835"/><g fill="#d3d3d3"><circle cx="30.5" cy="24.6" r="12.75"/><circle cx="21" cy="37" r="12.9"/><circle cx="48.3" cy="37.3" r="12.5"/><rect x="21" y="30" width="27.3" height="19.8"/></g><g fill="#f9f9f9"><circle cx="26.8" cy="34.4" r="8"/><circle cx="21.6" cy="41.3" r="8.5"/><circle cx="37" cy="41.5" r="8.2"/><rect x="21.6" y="36" width="15.4" height="13.8"/></g></svg>
<div class="t" style="left:313.75px;width:1200px;text-align:center;top:502.45px;font-size:16px;line-height:16px;color:#e1e1e1;font-weight:400;">24°</div>
<div class="t" style="left:313.75px;width:1200px;text-align:center;top:527.45px;font-size:14px;line-height:14px;color:#9b9b9b;font-weight:400;">15°</div>
<div class="t" style="left:374.0px;width:1200px;text-align:center;top:426.85px;font-size:14px;line-height:14px;color:#e1e1e1;font-weight:400;">Sun</div>
<svg style="position:absolute;left:952.90px;top:447.80px;width:37.44px;height:41.18px" viewBox="0 0 60 66" overflow="visible"><g fill="#d3d3d3"><circle cx="30.5" cy="24.6" r="12.75"/><circle cx="21" cy="37" r="12.9"/><circle cx="48.3" cy="37.3" r="12.5"/><rect x="21" y="30" width="27.3" height="19.8"/></g><g fill="#f9f9f9"><circle cx="26.8" cy="34.4" r="8"/><circle cx="21.6" cy="41.3" r="8.5"/><circle cx="37" cy="41.5" r="8.2"/><rect x="21.6" y="36" width="15.4" height="13.8"/></g><ellipse cx="21.5" cy="59" rx="1.5" ry="2.6" transform="rotate(35 21.5 59)" fill="#29a9f2"/><ellipse cx="32.4" cy="56.2" rx="1.5" ry="2.6" transform="rotate(35 32.4 56.2)" fill="#29a9f2"/><ellipse cx="44.1" cy="56.2" rx="1.5" ry="2.6" transform="rotate(35 44.1 56.2)" fill="#29a9f2"/><ellipse cx="33.8" cy="63.9" rx="1.5" ry="2.6" transform="rotate(35 33.8 63.9)" fill="#29a9f2"/></svg>
<div class="t" style="left:374.0px;width:1200px;text-align:center;top:502.45px;font-size:16px;line-height:16px;color:#e1e1e1;font-weight:400;">25°</div>
<div class="t" style="left:374.0px;width:1200px;text-align:center;top:527.45px;font-size:14px;line-height:14px;color:#9b9b9b;font-weight:400;">18°</div>
<div class="t" style="left:702.5px;top:602.58px;font-size:24px;line-height:24px;color:#e1e1e1;font-weight:400;letter-spacing:-0.7px;">Garage door</div>
<div style="position:absolute;left:686px;top:645px;width:164px;height:102px;box-sizing:border-box;background:#1c1c1c;border:1px solid #2f2f2f;border-radius:12px;"></div>
<div style="position:absolute;left:750px;top:655px;width:36px;height:36px;box-sizing:border-box;background:#2b2b2b;border-radius:50%;"></div>
<svg style="position:absolute;left:756px;top:661px;width:24px;height:24px" viewBox="0 0 24 24"><path fill="#767676" d="M19,20H17V11H7V20H5V9L12,5L19,9V20M8,12H16V14H8V12M8,15H16V17H8V15M16,18V20H8V18H16Z"/></svg>
<div class="t" style="left:168px;width:1200px;text-align:center;top:702.75px;font-size:14px;line-height:14px;color:#e1e1e1;font-weight:400;-webkit-text-stroke:0.4px #e1e1e1;">Garage</div>
<div class="t" style="left:168px;width:1200px;text-align:center;top:722.74px;font-size:12px;line-height:12px;color:#e1e1e1;font-weight:400;letter-spacing:0.4px;">4 hours ago</div>
<div style="position:absolute;left:858px;top:645px;width:164px;height:102px;box-sizing:border-box;background:#1c1c1c;border:1px solid #2f2f2f;border-radius:12px;"></div>
<div style="position:absolute;left:922px;top:655px;width:36px;height:36px;box-sizing:border-box;background:#263239;border-radius:50%;"></div>
<svg style="position:absolute;left:928px;top:661px;width:24px;height:24px" viewBox="0 0 24 24"><path fill="#6d8c9c" d="M4,4H20A2,2 0 0,1 22,6V18A2,2 0 0,1 20,20H4A2,2 0 0,1 2,18V6A2,2 0 0,1 4,4M4,6V18H11V6H4M20,18V6H18.76C19,6.54 18.95,7.07 18.95,7.13C18.88,7.8 18.41,8.5 18.24,8.75L15.91,11.3L19.23,11.28L19.24,12.5L14.04,12.47L14,11.47C14,11.47 17.05,8.24 17.2,7.95C17.34,7.67 17.91,6 16.5,6C15.27,6.05 15.41,7.3 15.41,7.3L13.87,7.31C13.87,7.31 13.88,6.65 14.25,6H13V18H15.58L15.57,17.14L16.54,17.13C16.54,17.13 17.45,16.97 17.46,16.08C17.5,15.08 16.65,15.08 16.5,15.08C16.37,15.08 15.43,15.13 15.43,15.95H13.91C13.91,15.95 13.95,13.89 16.5,13.89C19.1,13.89 18.96,15.91 18.96,15.91C18.96,15.91 19,17.16 17.85,17.63L18.37,18H20M8.92,16H7.42V10.2L5.62,10.76V9.53L8.76,8.41H8.92V16Z"/></svg>
<div class="t" style="left:340px;width:1200px;text-align:center;top:702.75px;font-size:14px;line-height:14px;color:#e1e1e1;font-weight:400;-webkit-text-stroke:0.4px #e1e1e1;">Open/close counter</div>
<div class="t" style="left:340px;width:1200px;text-align:center;top:722.74px;font-size:12px;line-height:12px;color:#e1e1e1;font-weight:400;letter-spacing:0.4px;">2,898</div>
<div style="position:absolute;left:686px;top:755px;width:164px;height:56px;box-sizing:border-box;background:#1c1c1c;border:1px solid #2f2f2f;border-radius:12px;"></div>
<div style="position:absolute;left:696px;top:765px;width:36px;height:36px;box-sizing:border-box;background:#233524;border-radius:50%;"></div>
<svg style="position:absolute;left:702px;top:771px;width:24px;height:24px" viewBox="0 0 24 24"><circle cx="9.9" cy="12.9" r="8.9" fill="#4caf50"/><rect x="6.9" y="0.9" width="6.2" height="2.1" fill="#4caf50"/><rect x="9" y="7.1" width="1.8" height="6.6" fill="#233524"/><circle cx="16.8" cy="5.9" r="1.2" fill="#4caf50"/><rect x="21" y="6.9" width="2.1" height="5.8" fill="#4caf50"/><rect x="21" y="15" width="2.1" height="1.8" fill="#4caf50"/></svg>
<div class="t" style="left:742.3px;top:767.35px;font-size:14px;line-height:14px;color:#e1e1e1;font-weight:400;-webkit-text-stroke:0.4px #e1e1e1;">15min remind...</div>
<div class="t" style="left:742.3px;top:786.84px;font-size:12px;line-height:12px;color:#e1e1e1;font-weight:400;letter-spacing:0.4px;">On</div>
<div style="position:absolute;left:858px;top:755px;width:164px;height:56px;box-sizing:border-box;background:#1c1c1c;border:1px solid #2f2f2f;border-radius:12px;"></div>
<div style="position:absolute;left:868px;top:765px;width:36px;height:36px;box-sizing:border-box;background:#2b2b2b;border-radius:50%;"></div>
<svg style="position:absolute;left:874px;top:771px;width:24px;height:24px" viewBox="0 0 24 24"><path fill="#767676" d="M10,0.2C9,0.2 8.2,1 8.2,2C8.2,3 9,3.8 10,3.8C11,3.8 11.8,3 11.8,2C11.8,1 11,0.2 10,0.2M15.67,1A7.33,7.33 0 0,0 23,8.33V7A6,6 0 0,1 17,1H15.67M18.33,1C18.33,3.58 20.42,5.67 23,5.67V4.33C21.16,4.33 19.67,2.84 19.67,1H18.33M21,1A2,2 0 0,0 23,3V1H21M7.92,4.03C7.75,4.03 7.58,4.06 7.42,4.11L2,5.8V11H3.8V7.33L5.91,6.67L2,22H3.8L6.67,13.89L9,17V22H10.8V15.59L8.31,11.05L9.04,8.18L10.12,10H15V8.2H11.38L9.38,4.87C9.08,4.37 8.54,4.03 7.92,4.03Z"/></svg>
<div class="t" style="left:913.6px;top:767.35px;font-size:14px;line-height:14px;color:#e1e1e1;font-weight:400;-webkit-text-stroke:0.4px #e1e1e1;">Motion alert</div>
<div class="t" style="left:913.6px;top:786.84px;font-size:12px;line-height:12px;color:#e1e1e1;font-weight:400;letter-spacing:0.4px;">Off</div>
<svg style="position:absolute;left:686px;top:819px;width:78px;height:56px" viewBox="0 0 78 56"><path d="M12,1 H66 A11,11 0 0 1 77,12 V44 A11,11 0 0 1 66,55 H12 A11,11 0 0 1 1,44 V12 A11,11 0 0 1 12,1 Z" fill="none" stroke="#009ac7" stroke-width="2" stroke-dasharray="6 6"/></svg>
<svg style="position:absolute;left:713.0px;top:835.0px;width:24px;height:24px" viewBox="0 0 24 24"><path fill="#ffffff" d="M19,13H13V19H11V13H5V11H11V5H13V11H19V13Z"/></svg>
<div style="position:absolute;left:1074px;top:320px;width:336px;height:102px;box-sizing:border-box;background:#1c1c1c;border:1px solid #2f2f2f;border-radius:12px;"></div>
<div style="position:absolute;left:1222.9px;top:329.9px;width:36px;height:36px;box-sizing:border-box;background:#2b2b2b;border-radius:50%;"></div>
<svg style="position:absolute;left:1229px;top:336px;width:24px;height:24px" viewBox="0 0 24 24"><path fill="#767676" d="M12.1,3L21.6,11.5H19V20H13.7V14.4H10.5V20H5V11.5H2.1Z"/><path fill="none" stroke="#2b2b2b" stroke-width="4.2" d="M1.7,2.4L21.6,21.8"/><path fill="none" stroke="#767676" stroke-width="1.5" stroke-linecap="round" d="M1.9,2.6L21.4,21.6"/></svg>
<div class="t" style="left:641px;width:1200px;text-align:center;top:379.15px;font-size:14px;line-height:14px;color:#e1e1e1;font-weight:400;-webkit-text-stroke:0.4px #e1e1e1;">Holiday mode</div>
<div class="t" style="left:641px;width:1200px;text-align:center;top:397.84px;font-size:12px;line-height:12px;color:#e1e1e1;font-weight:400;letter-spacing:0.4px;">Off</div>
<div class="t" style="left:641px;width:1200px;text-align:center;top:458.15px;font-size:16px;line-height:16px;color:#9e9e9e;font-weight:400;">Holiday mode is active.</div>
<div class="t" style="left:641px;width:1200px;text-align:center;top:481.85px;font-size:16px;line-height:16px;color:#9e9e9e;font-weight:400;">Some automations have been disabled.</div>
<svg style="position:absolute;left:1074px;top:542px;width:78px;height:56px" viewBox="0 0 78 56"><path d="M12,1 H66 A11,11 0 0 1 77,12 V44 A11,11 0 0 1 66,55 H12 A11,11 0 0 1 1,44 V12 A11,11 0 0 1 12,1 Z" fill="none" stroke="#009ac7" stroke-width="2" stroke-dasharray="6 6"/></svg>
<svg style="position:absolute;left:1101.0px;top:558.0px;width:24px;height:24px" viewBox="0 0 24 24"><path fill="#ffffff" d="M19,13H13V19H11V13H5V11H11V5H13V11H19V13Z"/></svg>
<div style="position:absolute;left:1462px;top:320px;width:336px;height:144px;box-sizing:border-box;background:#1c1c1c;border:1px solid #2f2f2f;border-radius:12px;"></div>
<div class="t" style="left:966.5px;width:1200px;text-align:center;top:344.95px;font-size:14px;line-height:14px;color:#0aa3da;font-weight:700;">Minutes</div>
<div class="t" style="left:1091.5px;width:1200px;text-align:center;top:344.95px;font-size:14px;line-height:14px;color:#0aa3da;font-weight:700;">Seconds</div>
<div style="position:absolute;left:1514px;top:367px;width:50px;height:80px;box-sizing:border-box;background:#009ac7;border-radius:3px;"></div>
<div class="t" style="left:939px;width:1200px;text-align:center;top:379.54px;font-size:57px;line-height:57px;color:#ffffff;font-weight:700;">0</div>
<div style="position:absolute;left:1514px;top:406px;width:50px;height:1px;box-sizing:border-box;background:#1b7fd8;"></div>
<div style="position:absolute;left:1569px;top:367px;width:50px;height:80px;box-sizing:border-box;background:#009ac7;border-radius:3px;"></div>
<div class="t" style="left:994px;width:1200px;text-align:center;top:379.54px;font-size:57px;line-height:57px;color:#ffffff;font-weight:700;">0</div>
<div style="position:absolute;left:1569px;top:406px;width:50px;height:1px;box-sizing:border-box;background:#1b7fd8;"></div>
<div style="position:absolute;left:1639px;top:367px;width:50px;height:80px;box-sizing:border-box;background:#009ac7;border-radius:3px;"></div>
<div class="t" style="left:1064px;width:1200px;text-align:center;top:379.54px;font-size:57px;line-height:57px;color:#ffffff;font-weight:700;">0</div>
<div style="position:absolute;left:1639px;top:406px;width:50px;height:1px;box-sizing:border-box;background:#1b7fd8;"></div>
<div style="position:absolute;left:1694px;top:367px;width:50px;height:80px;box-sizing:border-box;background:#009ac7;border-radius:3px;"></div>
<div class="t" style="left:1119px;width:1200px;text-align:center;top:379.54px;font-size:57px;line-height:57px;color:#ffffff;font-weight:700;">0</div>
<div style="position:absolute;left:1694px;top:406px;width:50px;height:1px;box-sizing:border-box;background:#1b7fd8;"></div>
<div style="position:absolute;left:1624px;top:387px;width:10px;height:10px;box-sizing:border-box;background:#009ac7;border-radius:50%;"></div>
<div style="position:absolute;left:1624px;top:417px;width:10px;height:10px;box-sizing:border-box;background:#009ac7;border-radius:50%;"></div>
<svg style="position:absolute;left:1461px;top:472px;width:78px;height:56px" viewBox="0 0 78 56"><path d="M12,1 H66 A11,11 0 0 1 77,12 V44 A11,11 0 0 1 66,55 H12 A11,11 0 0 1 1,44 V12 A11,11 0 0 1 12,1 Z" fill="none" stroke="#009ac7" stroke-width="2" stroke-dasharray="6 6"/></svg>
<svg style="position:absolute;left:1488.0px;top:488.0px;width:24px;height:24px" viewBox="0 0 24 24"><path fill="#ffffff" d="M19,13H13V19H11V13H5V11H11V5H13V11H19V13Z"/></svg>
<div style="position:absolute;left:298px;top:937px;width:336px;height:60px;box-sizing:border-box;background:#1c1c1c;border:1px solid #2f2f2f;border-radius:12px;"></div>
<div style="position:absolute;left:307.5px;top:947px;width:36px;height:36px;box-sizing:border-box;background:#2b2b2b;border-radius:50%;"></div>
<svg style="position:absolute;left:313.5px;top:953px;width:24px;height:24px" viewBox="0 0 24 24"><path fill="#767676" d="M12,2A7,7 0 0,1 19,9C19,11.4 17.8,13.5 16,14.7V17A1,1 0 0,1 15,18H9A1,1 0 0,1 8,17V14.7C6.2,13.5 5,11.4 5,9A7,7 0 0,1 12,2Z"/><path fill="none" stroke="#2b2b2b" stroke-width="3" d="M3,3L21,21"/><path fill="none" stroke="#767676" stroke-width="1.5" d="M3,3L21,21"/></svg>
<div class="t" style="left:354.5px;top:958.45px;font-size:16px;line-height:16px;color:#e1e1e1;font-weight:400;-webkit-text-stroke:0.4px #e1e1e1;">Lights</div>
<div style="position:absolute;left:1462px;top:937px;width:336px;height:60px;box-sizing:border-box;background:#1c1c1c;border:1px solid #2f2f2f;border-radius:12px;"></div>
<div class="t" style="left:1478.6px;top:960.45px;font-size:16px;line-height:16px;color:#9e9e9e;font-weight:400;-webkit-text-stroke:0.4px #9e9e9e;">Roof storage - 24hrs</div>
<svg style="position:absolute;left:1752px;top:957px;width:32px;height:20px" viewBox="0 0 32 20"><path fill="#44739e" d="M16,0L32,16L16,32L0,16Z"/></svg>
</body></html>
